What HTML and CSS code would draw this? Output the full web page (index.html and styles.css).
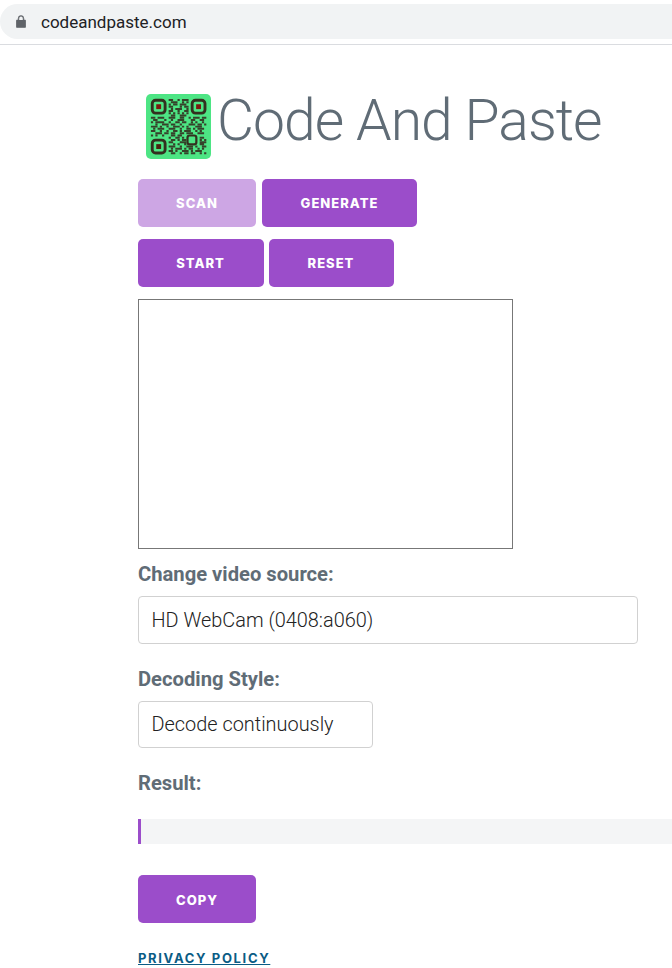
FILE: index.html
```html
<!DOCTYPE html>
<html lang="en">
<head>
<meta charset="utf-8">
<title>Code And Paste</title>
<link rel="stylesheet" href="styles.css">
</head>
<body>
<header class="chrome">
  <div class="address">
    <svg class="lock" width="10" height="13" viewBox="0 0 10 13"><path d="M2.2 5V3.4a2.8 2.8 0 0 1 5.6 0V5M1 5h8a.8.8 0 0 1 .8.8v5.9a.8.8 0 0 1-.8.8H1a.8.8 0 0 1-.8-.8V5.8A.8.8 0 0 1 1 5z" fill="#5f6368" stroke="#5f6368" stroke-width=".6"/><path d="M3.2 5V3.4a1.8 1.8 0 0 1 3.6 0V5z" fill="#f1f3f4"/></svg>
    <span class="url">codeandpaste.com</span>
  </div>
</header>
<main class="page">
  <h1 class="title">
    <svg class="logo" width="65" height="65" viewBox="0 0 66 66">
      <rect width="66" height="66" rx="5" fill="#4de584"/>
      <g transform="translate(5 5) scale(2.25)">
        <g fill="none" stroke="#33301f" stroke-width="1.300">
          <rect x=".6" y=".6" width="5.800" height="5.800" rx="1.500"/>
          <rect x="18.600" y=".6" width="5.800" height="5.800" rx="1.500"/>
          <rect x=".6" y="18.600" width="5.800" height="5.800" rx="1.500"/>
          <rect x="16.500" y="16.500" width="4" height="4" rx="1" stroke-width="1"/>
        </g>
        <rect x="2.400" y="2.400" width="2.200" height="2.200" fill="#7a1a10"/>
        <rect x="20.400" y="2.400" width="2.200" height="2.200" fill="#7a1a10"/>
        <rect x="2.400" y="20.400" width="2.200" height="2.200" fill="#4a2410"/>
        <path fill="none" stroke="#35422a" stroke-width=".9" d="M8 .5h2m2 0h1m1 0h3M9 1.500h3m2 0h1m1 0h1M8 2.500h1m1 0h2m1 0h3M8 3.500h2m3 0h1m1 0h2M9 4.500h1m1 0h3m2 0h1M8 5.500h2m2 0h1m2 0h2M8 6.500h1m1 0h1m1 0h1m1 0h1m1 0h1M9 7.500h2m2 0h3M0 8.500h2m1 0h3m2 0h3m2 0h2m2 0h1m1 0h3m1 0h2M1 9.500h2m3 0h1m2 0h1m2 0h3m3 0h2m2 0h2M0 10.500h1m1 0h4m2 0h1m2 0h2m1 0h2m2 0h1m1 0h1m2 0h1M2 11.500h1m2 0h3m1 0h2m2 0h1m3 0h3m1 0h2m1 0h1M0 12.500h3m1 0h1m2 0h1m2 0h3m1 0h1m1 0h1m3 0h3M1 13.500h1m1 0h3m2 0h3m2 0h1m2 0h2m1 0h1m1 0h3M0 14.500h2m2 0h1m2 0h1m2 0h2m1 0h1m1 0h3m2 0h1m1 0h1M2 15.500h3m1 0h2m1 0h2m2 0h2m1 0h3m2 0h3M0 16.500h1m1 0h1m2 0h1m3 0h2m1 0h2M8 17.500h1m2 0h2m1 0h1m7 0h2M9 18.500h2m1 0h1m1 0h2m6 0h1m1 0h1M8 19.500h2m3 0h3m6 0h3M10 20.500h1m1 0h1m2 0h1m6 0h2M8 21.500h3m2 0h1m2 0h3m1 0h1m2 0h2M9 22.500h1m1 0h3m1 0h1m1 0h2m2 0h1m1 0h1M8 23.500h2m1 0h1m2 0h3m1 0h1m1 0h3M9 24.500h2m2 0h1m1 0h2m1 0h2m2 0h1m1 0h1"/>
      </g>
    </svg>
    <span class="title-text">Code And Paste</span>
  </h1>
  <div class="btn-row btn-row-tabs">
    <button class="btn btn-muted btn-fixed">Scan</button>
    <button class="btn btn-generate">Generate</button>
  </div>
  <div class="btn-row btn-row-controls">
    <button class="btn btn-start">Start</button>
    <button class="btn btn-reset">Reset</button>
  </div>
  <div class="video"></div>
  <label class="field-label label-source">Change video source:</label>
  <div class="select select-wide">HD WebCam (0408:a060)</div>
  <label class="field-label label-style">Decoding Style:</label>
  <div class="select select-narrow">Decode continuously</div>
  <label class="field-label label-result">Result:</label>
  <pre class="result"></pre>
  <button class="btn btn-fixed btn-copy">Copy</button>
  <a class="privacy" href="#">Privacy Policy</a>
</main>
</body>
</html>
```
FILE: styles.css
```css
* { box-sizing: border-box; }
html, body { margin: 0; height: 968px; overflow: hidden; background: #fff; }
body { font-family: Roboto, sans-serif; color: #606c76; }

.chrome { height: 45px; padding-top: 4px; border-bottom: 1px solid #dadce0; }
.address {
  height: 35px;
  background: #f1f3f4;
  border-radius: 18px 0 0 18px;
  display: flex;
  align-items: center;
  padding-left: 16px;
}
.lock { flex: none; }
.url { margin-left: 15px; font-size: 17px; color: #202124; font-family: Roboto, sans-serif; }

.page { padding-left: 138px; }
.title {
  margin: 48px 0 0;
  display: flex;
  align-items: center;
  height: 66px;
  font-weight: 300;
  font-size: 57px;
  letter-spacing: -1px;
  color: #606c76;
  padding-left: 8px;
}
.title-text { margin-left: 6px; position: relative; top: -6px; white-space: nowrap; }
.logo { flex: none; filter: blur(.35px); }

.btn-row { display: flex; }
.btn-row-tabs { margin-top: 20px; gap: 6px; }
.btn-row-controls { margin-top: 12px; gap: 5px; }
.btn {
  display: block;
  height: 48px;
  padding: 0;
  border: 0;
  border-radius: 5px;
  background: #9b4dca;
  color: #fff;
  font-family: Inter, sans-serif;
  font-weight: 800;
  font-size: 13px;
  letter-spacing: 1px;
  text-transform: uppercase;
}
.btn-fixed { width: 118px; }
.btn-muted { background: #cda6e4; }
.btn-generate { width: 155px; }
.btn-start { width: 126px; padding-right: 1px; }
.btn-reset { width: 125px; padding-right: 1px; }
.btn-copy { padding-top: 1px; }

.video { margin-top: 12px; width: 375px; height: 250px; border: 1px solid #777; }

.field-label { display: block; font-weight: 700; font-size: 20.2px; line-height: 22px; color: #606c76; }
.label-source { margin-top: 14px; }
.label-style { margin-top: 24px; }
.label-result { margin-top: 24px; }

.select {
  height: 48px;
  margin-top: 11px;
  padding-left: 12.5px;
  display: flex;
  align-items: center;
  border: 1px solid #d1d1d1;
  border-radius: 4px;
  font-weight: 300;
  font-size: 19.9px;
  color: #222;
}
.select-wide { width: 500px; }
.select-narrow { width: 235px; height: 47px; }

.result {
  margin: 25px 0 31px;
  height: 25px;
  background: #f4f5f6;
  border-left: 3px solid #9b4dca;
}

.privacy {
  display: block;
  margin-top: 26px;
  width: max-content;
  font-family: Inter, sans-serif;
  font-weight: 700;
  font-size: 13px;
  line-height: 18px;
  letter-spacing: 1.65px;
  text-transform: uppercase;
  color: #0b5c85;
}
```
